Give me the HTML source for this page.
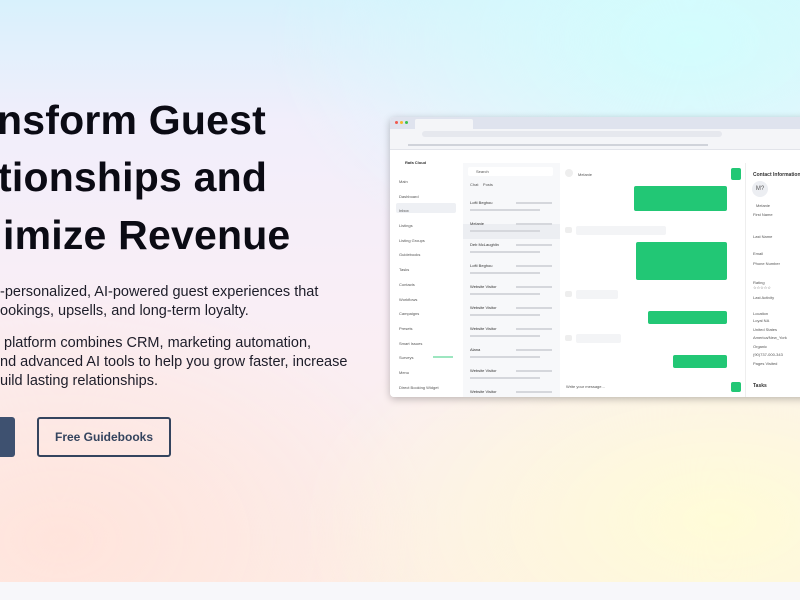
<!DOCTYPE html>
<html><head><meta charset="utf-8"><style>
*{margin:0;padding:0;box-sizing:border-box}
body{width:800px;height:600px;overflow:hidden;position:relative;font-family:"Liberation Sans",sans-serif;
background:
radial-gradient(ellipse 420px 260px at 690px 40px,#d3fdfd 0%,rgba(211,253,253,0) 100%),
radial-gradient(ellipse 420px 240px at 720px 520px,#fffcd8 0%,rgba(255,252,216,0) 100%),
radial-gradient(ellipse 380px 260px at 60px 540px,#ffe4dc 0%,rgba(255,228,220,0) 100%),
linear-gradient(180deg,#d8f1fc 0px,#f1eefb 120px,#f9eef6 300px,#fdeee6 600px);}
.h{position:absolute;font-weight:bold;font-size:41px;color:#0b0b14;letter-spacing:0.2px;white-space:nowrap}
.p{position:absolute;font-size:14.5px;color:#1d1d29;white-space:nowrap}
.strip{position:absolute;left:0;top:582px;width:800px;height:18px;background:#f7f7fa}
.b1{position:absolute;left:-10px;top:417px;width:25px;height:40px;background:#3e5170;border-radius:3px}
.b2{position:absolute;left:37px;top:417px;width:134px;height:40px;border:2px solid #34445e;border-radius:3px;font-size:12px;font-weight:bold;color:#34445e;text-align:center;line-height:36px}
.win{position:absolute;left:390px;top:117px;width:420px;height:280px;background:#fff;border-radius:4px 0 0 4px;box-shadow:0 2px 8px rgba(0,0,0,.25);overflow:hidden}
.a{position:absolute}
.t{position:absolute;font-size:4px;color:#555;white-space:nowrap}
.g{position:absolute;background:#22c775;border-radius:2px}
.l{position:absolute;height:2px;background:#bbb}
</style></head><body>
<div class="h" style="left:-3px;top:97px">nsform Guest</div>
<div class="h" style="left:-2px;top:154px">tionships and</div>
<div class="h" style="left:3px;top:212px">imize Revenue</div>
<div class="p" style="left:0;top:284px">-personalized, AI-powered guest experiences that</div>
<div class="p" style="left:0;top:303px">ookings, upsells, and long-term loyalty.</div>
<div class="p" style="left:4px;top:335px">platform combines CRM, marketing automation,</div>
<div class="p" style="left:0;top:354px">nd advanced AI tools to help you grow faster, increase</div>
<div class="p" style="left:0;top:373px">uild lasting relationships.</div>
<div class="b1"></div>
<div class="b2">Free Guidebooks</div>
<div class="strip"></div>

<div class="win">
 <div class="a" style="left:0;top:0;width:420px;height:12px;background:#dfe3ee"></div>
 <div class="a" style="left:5px;top:4px;width:3px;height:3px;border-radius:50%;background:#f05a4f"></div>
 <div class="a" style="left:10px;top:4px;width:3px;height:3px;border-radius:50%;background:#f5b82c"></div>
 <div class="a" style="left:15px;top:4px;width:3px;height:3px;border-radius:50%;background:#3bc04d"></div>
 <div class="a" style="left:25px;top:2px;width:58px;height:10px;background:#f4f5f8;border-radius:2px 2px 0 0"></div>
 <div class="a" style="left:0;top:12px;width:420px;height:10px;background:#f4f5f8"></div>
 <div class="a" style="left:32px;top:14px;width:300px;height:6px;background:#e6e8ee;border-radius:3px"></div>
 <div class="a" style="left:0;top:22px;width:420px;height:11px;background:#f4f5f8;border-bottom:1px solid #e2e4ea"></div>
 <div class="l" style="left:18px;top:27px;width:300px;background:#d0d3da"></div>
 <div class="t" style="left:15px;top:43px;font-weight:bold;color:#333">Rafa Cloud</div>
 <div class="a" style="left:0;top:52px;width:73px;height:230px;background:#fff"></div>
 <div class="t" style="left:9px;top:62px">Main</div>
 <div class="t" style="left:9px;top:77px">Dashboard</div>
 <div class="a" style="left:6px;top:86px;width:60px;height:10px;background:#eef0f4;border-radius:2px"></div>
 <div class="t" style="left:9px;top:91px">Inbox</div>
 <div class="t" style="left:9px;top:106px">Listings</div>
 <div class="t" style="left:9px;top:121px">Listing Groups</div>
 <div class="t" style="left:9px;top:135px">Guidebooks</div>
 <div class="t" style="left:9px;top:150px">Tasks</div>
 <div class="t" style="left:9px;top:165px">Contacts</div>
 <div class="t" style="left:9px;top:180px">Workflows</div>
 <div class="t" style="left:9px;top:194px">Campaigns</div>
 <div class="t" style="left:9px;top:209px">Presets</div>
 <div class="t" style="left:9px;top:224px">Smart Issues</div>
 <div class="t" style="left:9px;top:238px">Surveys</div>
 <div class="a" style="left:43px;top:239px;width:20px;height:2px;background:#9de6c0"></div>
 <div class="t" style="left:9px;top:253px">Menu</div>
 <div class="t" style="left:9px;top:268px">Direct Booking Widget</div>
 <div class="a" style="left:73px;top:46px;width:97px;height:240px;background:#f7f8fa"></div>
 <div class="a" style="left:78px;top:50px;width:85px;height:9px;background:#fff;border-radius:2px"></div>
 <div class="t" style="left:86px;top:52px">Search</div>
 <div class="t" style="left:80px;top:65px">Chat &nbsp;&nbsp; Posts</div>
 <div class="a" style="left:73px;top:107px;width:97px;height:15px;background:#eceef2"></div>
 <div id="list"></div>
 <div class="a" style="left:170px;top:46px;width:185px;height:240px;background:#fff"></div>
 <div class="a" style="left:175px;top:52px;width:8px;height:8px;background:#eee;border-radius:50%"></div>
 <div class="t" style="left:188px;top:55px">Melanie</div>
 <div class="g" style="left:341px;top:51px;width:10px;height:12px"></div>
 <div class="g" style="left:244px;top:69px;width:93px;height:25px"></div>
 <div class="g" style="left:246px;top:125px;width:91px;height:38px"></div>
 <div class="g" style="left:258px;top:194px;width:79px;height:13px"></div>
 <div class="g" style="left:283px;top:238px;width:54px;height:13px"></div>
 <div class="a" style="left:175px;top:110px;width:7px;height:6px;background:#eee;border-radius:2px"></div>
 <div class="a" style="left:186px;top:109px;width:90px;height:9px;background:#f3f4f6;border-radius:2px"></div>
 <div class="a" style="left:175px;top:174px;width:7px;height:6px;background:#eee;border-radius:2px"></div>
 <div class="a" style="left:186px;top:173px;width:42px;height:9px;background:#f3f4f6;border-radius:2px"></div>
 <div class="a" style="left:175px;top:218px;width:7px;height:6px;background:#eee;border-radius:2px"></div>
 <div class="a" style="left:186px;top:217px;width:45px;height:9px;background:#f3f4f6;border-radius:2px"></div>
 <div class="t" style="left:176px;top:267px">Write your message...</div>
 <div class="g" style="left:341px;top:265px;width:10px;height:10px"></div>
 <div class="a" style="left:355px;top:46px;width:65px;height:240px;background:#fff;border-left:1px solid #eee"></div>
 <div class="t" style="left:363px;top:55px;font-weight:bold;color:#333;font-size:5px">Contact Information</div>
 <div class="a" style="left:362px;top:64px;width:16px;height:16px;border-radius:50%;background:#eceef2;font-size:6px;color:#555;text-align:center;line-height:16px">M?</div>
 <div class="t" style="left:366px;top:86px">Melanie</div>
 <div class="t" style="left:363px;top:95px">First Name</div>
 <div class="t" style="left:363px;top:117px">Last Name</div>
 <div class="t" style="left:363px;top:134px">Email</div>
 <div class="t" style="left:363px;top:144px">Phone Number</div>
 <div class="t" style="left:363px;top:163px">Rating</div>
 <div class="t" style="left:363px;top:168px">☆☆☆☆☆</div>
 <div class="t" style="left:363px;top:178px">Last Activity</div>
 <div class="t" style="left:363px;top:194px">Location</div>
 <div class="t" style="left:363px;top:201px">Loyal NA</div>
 <div class="t" style="left:363px;top:210px">United States</div>
 <div class="t" style="left:363px;top:218px">America/New_York</div>
 <div class="t" style="left:363px;top:227px">Organic</div>
 <div class="t" style="left:363px;top:235px">(90)737-000-343</div>
 <div class="t" style="left:363px;top:244px">Pages Visited</div>
 <div class="t" style="left:363px;top:266px;font-weight:bold;color:#333;font-size:5px">Tasks</div>
</div>
<script>
var n=["Lofti Beghou","Melanie","Deb McLaughlin","Lofti Beghou","Website Visitor","Website Visitor","Website Visitor","Alana","Website Visitor","Website Visitor"];
var h="";for(var i=0;i<n.length;i++){var y=83+i*21;h+='<div class="t" style="left:80px;top:'+y+'px;color:#333">'+n[i]+'</div><div class="l" style="left:80px;top:'+(y+9)+'px;width:70px;background:#d5d7dc"></div><div class="l" style="left:126px;top:'+(y+2)+'px;width:36px;background:#d5d7dc"></div>';}
document.getElementById("list").outerHTML=h;
</script>
</body></html>
